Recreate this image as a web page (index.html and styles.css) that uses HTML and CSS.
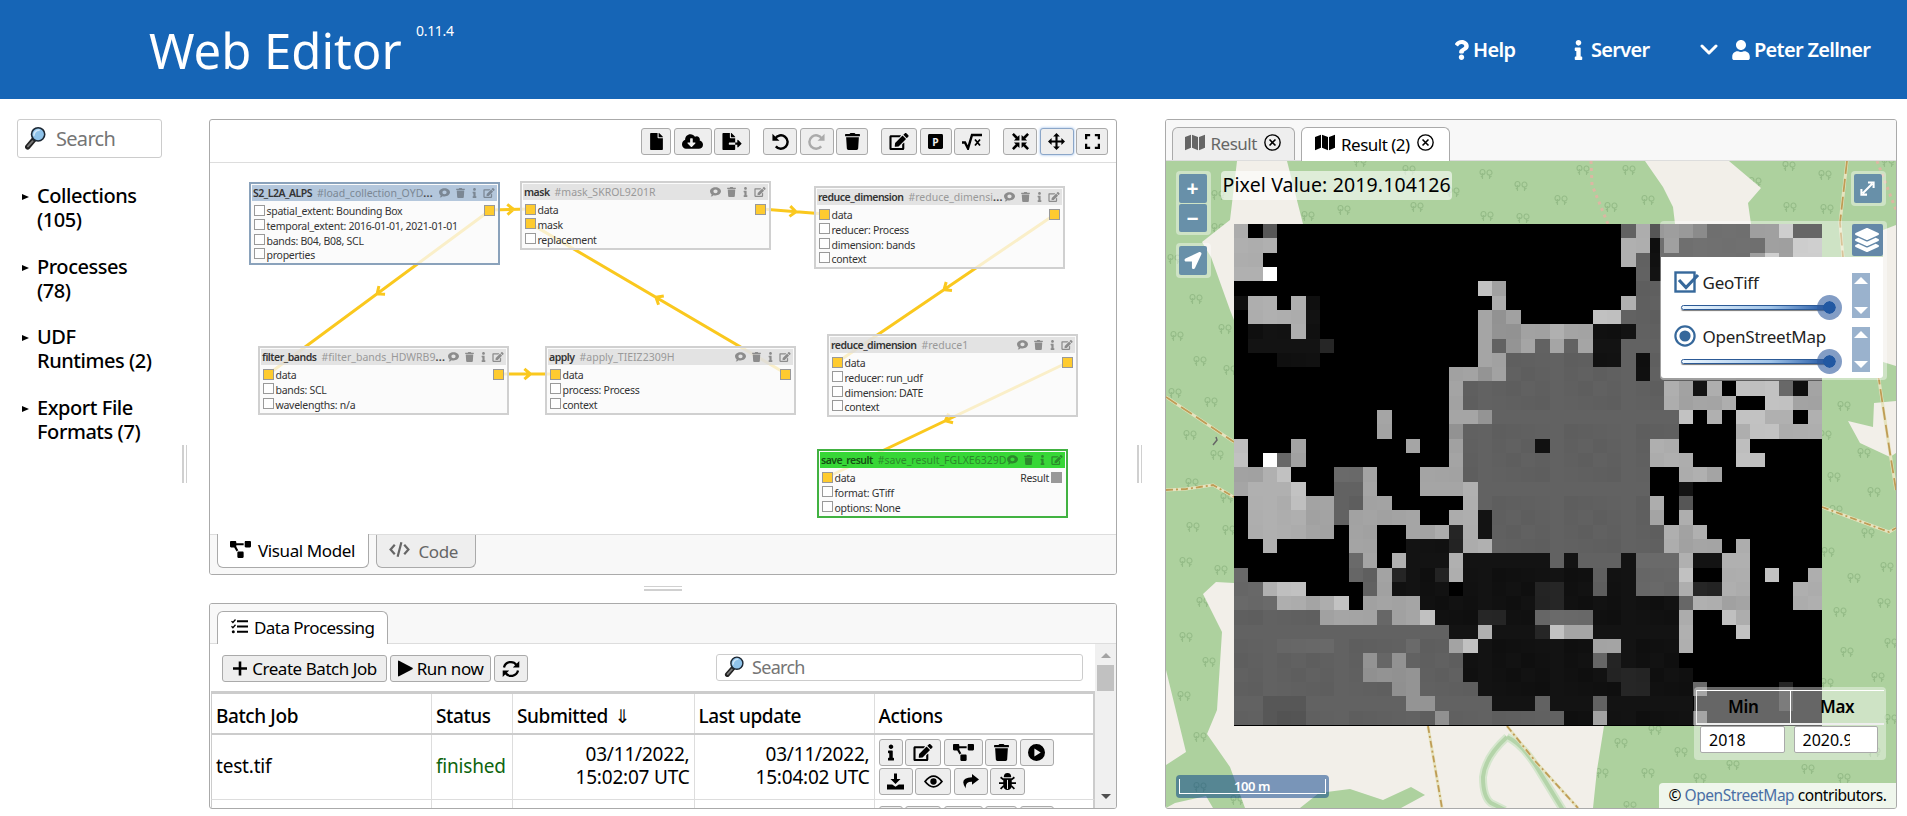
FILE: index.html
```html
<!DOCTYPE html>
<html lang="en">
<head>
<meta charset="utf-8">
<title>Web Editor</title>
<link rel="stylesheet" href="styles.css">
</head>
<body>
<svg class="sprite" aria-hidden="true">
  <symbol id="trash" viewBox="0 0 448 512"><path d="M432 32H312l-9.4-18.7A24 24 0 0 0 281.1 0H166.8a23.72 23.72 0 0 0-21.4 13.3L136 32H16A16 16 0 0 0 0 48v32a16 16 0 0 0 16 16h416a16 16 0 0 0 16-16V48a16 16 0 0 0-16-16zM53.2 467a48 48 0 0 0 47.9 45h245.8a48 48 0 0 0 47.9-45L416 128H32z"/></symbol>
  <symbol id="info" viewBox="0 0 192 512"><path d="M20 424.229h20V279.771H20c-11.046 0-20-8.954-20-20V212c0-11.046 8.954-20 20-20h112c11.046 0 20 8.954 20 20v212.229h20c11.046 0 20 8.954 20 20V492c0 11.046-8.954 20-20 20H20c-11.046 0-20-8.954-20-20v-47.771c0-11.046 8.954-20 20-20zM96 0C56.235 0 24 32.235 24 72s32.235 72 72 72 72-32.235 72-72S135.764 0 96 0z"/></symbol>
  <symbol id="edit" viewBox="0 0 576 512"><path d="M402.6 83.2l90.2 90.2c3.8 3.8 3.8 10 0 13.8L274.4 405.6l-92.8 10.3c-12.4 1.4-22.9-9.1-21.5-21.5l10.3-92.8L388.8 83.2c3.8-3.8 10-3.8 13.8 0zm162-22.9l-48.8-48.8c-15.2-15.2-39.9-15.2-55.2 0l-35.4 35.4c-3.8 3.8-3.8 10 0 13.8l90.2 90.2c3.8 3.8 10 3.8 13.8 0l35.4-35.4c15.2-15.3 15.2-40 0-55.2zM384 346.2V448H64V128h229.8c3.2 0 6.2-1.3 8.5-3.5l40-40c7.6-7.6 2.2-20.5-8.5-20.5H48C21.5 64 0 85.5 0 112v352c0 26.5 21.5 48 48 48h352c26.5 0 48-21.5 48-48V306.2c0-10.7-12.9-16-20.5-8.5l-40 40c-2.2 2.3-3.5 5.3-3.5 8.5z"/></symbol>
  <symbol id="user" viewBox="0 0 448 512"><path d="M224 256c70.7 0 128-57.3 128-128S294.7 0 224 0 96 57.3 96 128s57.3 128 128 128zm89.6 32h-16.7c-22.2 10.2-46.9 16-72.9 16s-50.6-5.8-72.9-16h-16.7C60.2 288 0 348.2 0 422.4V464c0 26.5 21.5 48 48 48h352c26.5 0 48-21.5 48-48v-41.6c0-74.2-60.2-134.4-134.4-134.4z"/></symbol>
  <symbol id="question" viewBox="0 0 384 512"><path d="M202.021 0C122.202 0 70.503 32.703 29.914 91.026c-7.363 10.58-5.093 25.086 5.178 32.874l43.138 32.709c10.373 7.865 25.132 6.026 33.253-4.148 25.049-31.381 43.63-49.449 82.757-49.449 30.764 0 68.816 19.799 68.816 49.631 0 22.552-18.617 34.134-48.993 51.164-35.423 19.86-82.299 44.576-82.299 106.405V320c0 13.255 10.745 24 24 24h72.471c13.255 0 24-10.745 24-24v-5.773c0-42.86 125.268-44.645 125.268-160.627C377.504 66.256 286.902 0 202.021 0zM192 373.459c-38.196 0-69.271 31.075-69.271 69.271 0 38.195 31.075 69.27 69.271 69.27s69.271-31.075 69.271-69.271-31.075-69.27-69.271-69.27z"/></symbol>
  <symbol id="chevron" viewBox="0 0 18 12"><path d="M2 2l7 7 7-7" fill="none" stroke="currentColor" stroke-width="3" stroke-linecap="round" stroke-linejoin="round"/></symbol>
  <symbol id="file" viewBox="0 0 384 512"><path d="M224 136V0H24C10.7 0 0 10.7 0 24v464c0 13.3 10.7 24 24 24h336c13.3 0 24-10.7 24-24V160H248c-13.2 0-24-10.8-24-24zm160-14.1v6.1H256V0h6.1c6.4 0 12.5 2.5 17 7l97.9 98c4.5 4.5 7 10.6 7 16.9z"/></symbol>
  <symbol id="cloud" viewBox="0 0 640 512"><path d="M537.6 226.6c4.1-10.7 6.4-22.4 6.4-34.6 0-53-43-96-96-96-19.7 0-38.1 6-53.3 16.2C367 64.2 315.3 32 256 32c-88.4 0-160 71.6-160 160 0 2.7.1 5.4.2 8.1C40.2 219.8 0 273.2 0 336c0 79.5 64.5 144 144 144h368c70.7 0 128-57.3 128-128 0-61.9-44-113.6-102.4-125.4zm-132.9 88.7L299.3 420.7c-6.2 6.2-16.4 6.2-22.6 0L171.3 315.3c-10.1-10.1-2.9-27.3 11.3-27.3H248V176c0-8.8 7.2-16 16-16h48c8.8 0 16 7.2 16 16v112h65.4c14.2 0 21.4 17.2 11.3 27.3z"/></symbol>
  <symbol id="export" viewBox="0 0 576 512"><path d="M384 121.9c0-6.3-2.5-12.4-7-16.9L279.1 7c-4.5-4.5-10.6-7-17-7H256v128h128zM571 308l-95.7-96.4c-10.1-10.1-27.4-3-27.4 11.3V288h-64v64h64v65.2c0 14.3 17.3 21.4 27.4 11.3L571 332c6.6-6.6 6.6-17.4 0-24zm-379 28v-32c0-8.8 7.2-16 16-16h176V160H248c-13.2 0-24-10.8-24-24V0H24C10.7 0 0 10.7 0 24v464c0 13.3 10.7 24 24 24h336c13.3 0 24-10.7 24-24V352H208c-8.8 0-16-7.2-16-16z"/></symbol>
  <symbol id="undo" viewBox="0 0 16 16"><path d="M3 5.2A6.3 6.3 0 1 1 3.6 12.6" fill="none" stroke="currentColor" stroke-width="2.3"/><path d="M.4 .8v6.6H7z"/></symbol>
  <symbol id="redo" viewBox="0 0 16 16"><path d="M13 5.2A6.3 6.3 0 1 0 12.4 12.6" fill="none" stroke="currentColor" stroke-width="2.3"/><path d="M15.6 .8v6.6H9z"/></symbol>
  <symbol id="parking" viewBox="0 0 16 16"><rect width="16" height="16" rx="1.5"/><text x="8" y="12.4" text-anchor="middle" class="parking-letter">P</text></symbol>
  <symbol id="root" viewBox="0 0 20 16"><path d="M0 9h3l3 6L10 1.5h10" fill="none" stroke="currentColor" stroke-width="2.4"/><path d="M13 6l5 6M18 6l-5 6" stroke="currentColor" stroke-width="1.8"/></symbol>
  <symbol id="compress" viewBox="0 0 16 16"><path d="M7 7H1.8l1.7-1.7L0 1.7 1.7 0l3.6 3.5L7 1.8zM9 7V1.8l1.7 1.7L14.3 0 16 1.7l-3.5 3.6L14.2 7zM7 9v5.2l-1.7-1.7L1.7 16 0 14.3l3.5-3.6L1.8 9zM9 9h5.2l-1.7 1.7 3.5 3.6-1.7 1.7-3.6-3.5L9 14.2z"/></symbol>
  <symbol id="move" viewBox="0 0 16 16"><path d="M8 0l3.2 3.4H9V7h3.6V4.8L16 8l-3.4 3.2V9H9v3.6h2.2L8 16l-3.2-3.4H7V9H3.4v2.2L0 8l3.4-3.2V7H7V3.4H4.8z"/></symbol>
  <symbol id="expand" viewBox="0 0 16 16"><path d="M1.2 5.5V1.2h4.3M10.5 1.2h4.3v4.3M14.8 10.5v4.3h-4.3M5.5 14.8H1.2v-4.3" fill="none" stroke="currentColor" stroke-width="2.4"/></symbol>
  <symbol id="diagram" viewBox="0 0 640 512"><path d="M384 320H256c-17.67 0-32 14.33-32 32v128c0 17.67 14.33 32 32 32h128c17.67 0 32-14.33 32-32V352c0-17.67-14.33-32-32-32zM192 32c0-17.67-14.33-32-32-32H32C14.33 0 0 14.33 0 32v128c0 17.67 14.33 32 32 32h95.72l73.16 128.04C211.98 300.98 232.4 288 256 288h.28L192 175.51V128h224V64H192V32zM608 0H480c-17.67 0-32 14.33-32 32v128c0 17.67 14.33 32 32 32h128c17.67 0 32-14.33 32-32V32c0-17.67-14.33-32-32-32z"/></symbol>
  <symbol id="code" viewBox="0 0 20 16"><path d="M5.5 3.5L1.5 8l4 4.5M14.5 3.5l4 4.5-4 4.5M11.8 1L8.2 15" fill="none" stroke="currentColor" stroke-width="2.1"/></symbol>
  <symbol id="tasks" viewBox="0 0 17 16"><path d="M6 2.8h11M6 8h11M6 13.2h11" stroke="currentColor" stroke-width="1.9"/><path d="M.5 2.6l1.4 1.4L4.5 1M.5 7.800l1.4 1.4L4.5 6.2" fill="none" stroke="currentColor" stroke-width="1.3"/><circle cx="2.3" cy="13.2" r="1.5"/></symbol>
  <symbol id="plus" viewBox="0 0 16 16"><path d="M8 1v14M1 8h14" stroke="currentColor" stroke-width="2.6"/></symbol>
  <symbol id="play" viewBox="0 0 15 16"><path d="M0 .8v14.4q0 1 1 .6L14.4 8.700q.8-.7 0-1.4L1 .2Q0-.2 0 .8z"/></symbol>
  <symbol id="sync" viewBox="0 0 18 18"><path d="M2 7.5A7 7 0 0 1 14.500 5M16 10.500A7 7 0 0 1 3.500 13" fill="none" stroke="currentColor" stroke-width="2.3"/><path d="M17.300 1v6.500h-6.500zM.7 17v-6.500h6.500z"/></symbol>
  <symbol id="playcircle" viewBox="0 0 16 16"><path fill-rule="evenodd" d="M8 0a8 8 0 1 0 0 16A8 8 0 0 0 8 0zM6 4.200L12 8l-6 3.800z"/></symbol>
  <symbol id="download" viewBox="0 0 17 16"><path d="M7 0h3v5.500h3.500L8.500 10.500l-5-5H7z"/><path d="M0 11h5.200l3.300 2.300L11.800 11H17v5H0z"/></symbol>
  <symbol id="eye" viewBox="0 0 18 12"><path d="M1 6q8-10 16 0-8 10-16 0z" fill="none" stroke="currentColor" stroke-width="1.7"/><circle cx="9" cy="6" r="3"/></symbol>
  <symbol id="share" viewBox="0 0 17 15"><path d="M10 0l7 5.500-7 5.300V7.700Q3 7.500 3.800 14.500-3.500 4 10 3.300z"/></symbol>
  <symbol id="bug" viewBox="0 0 16 16"><path d="M4.500 4a3.500 4 0 0 1 7 0zM4 5h8v7a4 4 0 0 1-8 0z"/><path d="M4.500 6.500L1.500 4M11.500 6.500l3-2.500M0 9.500h16M4.500 12L1.500 15M11.500 12l3 3" stroke="currentColor" stroke-width="1.6"/><path d="M8 6.500V15" stroke="#eee"/></symbol>
  <symbol id="comment" viewBox="0 0 16 14"><path fill-rule="evenodd" d="M8 0c4.500 0 8 2.700 8 6s-3.500 6-8 6c-1 0-2-.1-2.800-.4Q3.500 13.500 1 13.700q1.300-1.300 1.400-3Q0 8.700 0 6c0-3.300 3.500-6 8-6zM8 3.200A3 2.700 0 1 0 8 8.800 3 2.700 0 1 0 8 3.200z"/></symbol>
  <symbol id="map" viewBox="0 0 20 16"><path d="M0 2.500L6 .3v13L0 15.800zM7 .3l6 2.200V15.700l-6-2.400zM14 2.500L20 .2v13L14 15.700z"/></symbol>
  <symbol id="close" viewBox="0 0 16 16"><path d="M5.200 5.200l5.600 5.600M10.800 5.200l-5.600 5.600" stroke="currentColor" stroke-width="1.5"/><circle cx="8" cy="8" r="7.200" fill="none" stroke="currentColor" stroke-width="1.3"/></symbol>
  <symbol id="lens" viewBox="0 0 20 22"><path d="M2.500 19.500l6-7" stroke="#222" stroke-width="5" stroke-linecap="round"/><path d="M2.800 19l4.500-5" stroke="#777" stroke-width="1.8" stroke-linecap="round"/><circle cx="12.500" cy="7.500" r="6.300" fill="#8fc3ea" stroke="#1c2733" stroke-width="1.5"/><path d="M8.500 9a5 5 0 0 1 5.500-5.500" fill="none" stroke="#cfe6f8" stroke-width="1.600"/></symbol>
  <symbol id="layers" viewBox="0 0 512 512"><path d="M12.41 148.02l232.94 105.67c6.8 3.09 14.49 3.09 21.29 0l232.94-105.67c16.55-7.51 16.55-32.52 0-40.03L266.65 2.31a25.607 25.607 0 0 0-21.29 0L12.41 107.98c-16.55 7.51-16.55 32.53 0 40.04zm487.18 88.28l-58.09-26.33-161.64 73.27c-7.56 3.43-15.59 5.17-23.86 5.17s-16.29-1.74-23.86-5.17L70.51 209.97l-58.1 26.33c-16.55 7.5-16.55 32.5 0 40l232.94 105.59c6.8 3.08 14.49 3.08 21.29 0L499.59 276.3c16.55-7.5 16.55-32.5 0-40zm0 127.8l-57.87-26.23-161.86 73.37c-7.56 3.43-15.59 5.17-23.86 5.17s-16.29-1.74-23.86-5.17L70.29 337.87 12.41 364.1c-16.55 7.5-16.55 32.5 0 40l232.94 105.59c6.8 3.08 14.49 3.08 21.29 0L499.59 404.1c16.55-7.5 16.55-32.5 0-40z"/></symbol>
  <symbol id="locate" viewBox="0 0 512 512"><path d="M444.52 3.52L28.74 195.42c-47.97 22.39-31.98 92.75 19.19 92.75h175.91v175.91c0 51.17 70.36 67.17 92.75 19.19l191.9-415.78c15.99-38.39-25.59-79.97-63.97-63.97z"/></symbol>
  <symbol id="resize" viewBox="0 0 16 16"><path d="M3 13L13 3M8.500 1.500h6v6M1.500 8.500v6h6" fill="none" stroke="currentColor" stroke-width="2.2"/></symbol>
  <symbol id="trees" viewBox="0 0 14 12"><path d="M3.500 11V5M1 4.500a2.500 3 0 1 1 5 0 2.500 2 0 0 1-5 0M2 8l1.500 1.500M10.500 11V7M8 5a2.500 3 0 1 1 5 0 2.500 2 0 0 1-5 0M12.500 8l-2 1.500" fill="none" stroke="#95bc88" stroke-width="1.1"/></symbol>
</svg>

<header class="header">
  <h1 class="title">Web Editor</h1>
  <span class="version">0.11.4</span>
  <nav class="nav">
    <a class="nav-help"><svg class="i-question"><use href="#question"/></svg>Help</a>
    <a class="nav-server"><svg class="i-info"><use href="#info"/></svg>Server</a>
    <a class="nav-user"><svg class="i-chevron"><use href="#chevron"/></svg><svg class="i-user"><use href="#user"/></svg>Peter Zellner</a>
  </nav>
</header>

<main class="main">
  <aside class="sidebar">
    <div class="search"><svg><use href="#lens"/></svg><span>Search</span></div>
    <ul class="tree">
      <li>Collections (105)</li>
      <li>Processes (78)</li>
      <li>UDF<br>Runtimes (2)</li>
      <li>Export File Formats (7)</li>
    </ul>
  </aside>
  <div class="split-v"><i></i></div>

  <div class="middle">
    <section class="panel editor">
      <div class="toolbar">
        <div class="group">
          <button class="w30"><svg class="s12"><use href="#file"/></svg></button>
          <button class="w38"><svg class="s22"><use href="#cloud"/></svg></button>
          <button class="w36"><svg class="s20"><use href="#export"/></svg></button>
        </div>
        <div class="group">
          <button class="w34"><svg class="s17"><use href="#undo"/></svg></button>
          <button class="w34 off"><svg class="s17"><use href="#redo"/></svg></button>
          <button class="w32"><svg class="s15"><use href="#trash"/></svg></button>
        </div>
        <div class="group">
          <button class="w36"><svg class="s20"><use href="#edit"/></svg></button>
          <button class="w32"><svg class="s15"><use href="#parking"/></svg></button>
          <button class="w36"><svg class="s20"><use href="#root"/></svg></button>
        </div>
        <div class="group">
          <button class="w34"><svg class="s17"><use href="#compress"/></svg></button>
          <button class="w34 focus"><svg class="s17"><use href="#move"/></svg></button>
          <button class="w32"><svg class="s15"><use href="#expand"/></svg></button>
        </div>
      </div>
      <div class="canvas" id="canvas"><svg class="edges" id="edges" width="906" height="371"></svg></div>
      <div class="tabs tabs-bottom">
        <div class="tab active"><svg class="s22"><use href="#diagram"/></svg>Visual Model</div>
        <div class="tab tab-code"><svg class="s22"><use href="#code"/></svg>Code</div>
      </div>
    </section>
    <div class="split-h"><i></i></div>
    <section class="panel jobs">
      <div class="tabs tabs-top"><div class="tab active tab-data"><svg class="s17"><use href="#tasks"/></svg>Data Processing</div></div>
      <div class="jobs-body">
        <div class="jobs-content">
          <div class="jobs-bar">
            <button class="w165"><svg class="s16"><use href="#plus"/></svg>Create Batch Job</button>
            <button class="w101"><svg class="s15"><use href="#play"/></svg>Run now</button>
            <button class="w34"><svg class="s18"><use href="#sync"/></svg></button>
            <div class="search search-jobs"><svg><use href="#lens"/></svg><span>Search</span></div>
          </div>
          <div class="grid head">
            <div>Batch Job</div><div>Status</div><div>Submitted <span class="sort">⇓</span></div><div>Last update</div><div>Actions</div>
          </div>
          <div class="grid row">
            <div>test.tif</div><div class="ok">finished</div>
            <div class="date">03/11/2022,<br>15:02:07 UTC</div><div class="date">03/11/2022,<br>15:04:02 UTC</div>
            <div class="actions">
              <button class="w24"><svg class="s6"><use href="#info"/></svg></button>
              <button class="w36"><svg class="s20"><use href="#edit"/></svg></button>
              <button class="w39"><svg class="s22"><use href="#diagram"/></svg></button>
              <button class="w32"><svg class="s15"><use href="#trash"/></svg></button>
              <button class="w34"><svg class="s17"><use href="#playcircle"/></svg></button>
              <button class="w34"><svg class="s17"><use href="#download"/></svg></button>
              <button class="w36"><svg class="s19"><use href="#eye"/></svg></button>
              <button class="w34"><svg class="s17"><use href="#share"/></svg></button>
              <button class="w35"><svg class="s17"><use href="#bug"/></svg></button>
            </div>
          </div>
          <div class="grid row row-next">
            <div></div><div></div><div></div><div></div>
            <div class="actions"><button class="w24"></button><button class="w36"></button><button class="w39"></button><button class="w32"></button><button class="w34"></button></div>
          </div>
        </div>
        <div class="scrollbar"><i class="up"></i><i class="thumb"></i><i class="down"></i></div>
      </div>
    </section>
  </div>
  <div class="split-v"><i></i></div>

  <section class="panel viewer">
    <div class="tabs tabs-top">
      <div class="tab tab-r1"><svg class="s20"><use href="#map"/></svg>Result<svg class="s17 x"><use href="#close"/></svg></div>
      <div class="tab active tab-r2"><svg class="s20"><use href="#map"/></svg>Result (2)<svg class="s17 x"><use href="#close"/></svg></div>
    </div>
    <div class="map">
      <svg class="basemap" viewBox="1166 161 730 647" width="730" height="647">
        <rect x="1166" y="161" width="730" height="647" fill="#add19e"/>
        <g id="forest"></g>
        <g fill="#f2efe9">
          <path d="M1237 161h50l16 63v30h-69v66l-4-10-19-53-9-15 28-22z"/>
          <path d="M1645 161h84l32 27-13 15 3 21h-76l-2-17-10-20z"/>
          <path d="M1896 225l-13 5v132l13 4z"/>
          <path d="M1874 403l22-2v52l-6 4-30-14-12-22 25 6z"/>
          <path d="M1216 582l-13 12 19 38-5 78-10 24 23 33 15 41h348l4-38 7-44v-40h-370V583z"/>
          <path d="M1166 670l20 82-20 13zM1166 808l9-5 31-7 7 12z"/>
        </g>
        <path fill="#add19e" d="M1300 808l19-15 31-4 33 11 28-13 14 8-24 13z"/>
        <path d="M1507 737q-22 20-24 40 0 20 8 26l14 7M1507 737q14 6 29 29l27 44" fill="none" stroke="#d5e6cd" stroke-width="8"/>
        <path d="M1507 737q-22 20-24 40 0 20 8 26l14 7M1507 737q14 6 29 29l27 44" fill="none" stroke="#b4d4a9" stroke-width="4"/>
        <g fill="none" stroke="#e6e3bf" stroke-width="3">
          <path d="M1166 397L1234 442M1166 490l20-1 27-4 21 12M1822 507l67 25 7-4M1428 726l14 82M1507 726l29 36 42 46M1847 161l-7 62 3 34 36 123 11 73 6 37"/>
        </g>
        <g fill="none" stroke="#bf9c55" stroke-width="1.8">
          <path stroke-dasharray="13 5" d="M1166 397L1234 442M1847 161l-7 62 3 34 36 123 11 73 6 37"/>
          <path stroke-dasharray="7 3 2 3" d="M1166 490l20-1 27-4 21 12M1822 507l67 25 7-4M1428 726l14 82M1507 726l29 36 42 46"/>
          <path stroke="#dcb7a3" stroke-width="3" stroke-dasharray="3 4" d="M1591 161l1 24 16 39M1877 161l19 49"/>
        </g>
        <path d="M1213 445l4-5-1-3" fill="none" stroke="#666" stroke-width="1.5"/>
        <g id="raster" shape-rendering="crispEdges"></g>
      </svg>

      <div class="ctl zoom"><b>+</b><b>−</b></div>
      <div class="ctl locate"><b><svg class="s20"><use href="#locate"/></svg></b></div>
      <div class="pixel">Pixel Value: 2019.104126</div>
      <div class="ctl full"><b><svg class="s15"><use href="#resize"/></svg></b></div>
      <div class="switcher">
        <div class="switch-btn"><svg class="s24"><use href="#layers"/></svg></div>
        <div class="layer-list">
          <div class="layer">
            <div class="layer-main">
              <div class="layer-name"><svg width="26" height="24" viewBox="0 0 26 24"><rect x="1.5" y="1.5" width="19" height="19" fill="#fff" stroke="#36689b" stroke-width="2.4"/><path d="M5 9l7 7.500L24 4" fill="none" stroke="#36689b" stroke-width="3.200"/></svg>GeoTiff</div>
              <div class="slider"><i></i></div>
            </div>
            <div class="updown"><i></i><i></i></div>
          </div>
          <div class="layer">
            <div class="layer-main">
              <div class="layer-name"><svg width="26" height="24" viewBox="0 0 26 24"><circle cx="11" cy="11" r="9.6" fill="#fff" stroke="#36689b" stroke-width="2.2"/><circle cx="11" cy="11" r="5.6" fill="#36689b"/></svg>OpenStreetMap</div>
              <div class="slider"><i></i></div>
            </div>
            <div class="updown"><i></i><i></i></div>
          </div>
        </div>
      </div>
      <div class="minmax">
        <div class="mm-head"><span>Min</span><span>Max</span></div>
        <div class="mm-body"><div>2018</div><div><span>2020.9</span></div></div>
      </div>
      <div class="scale"><div>100 m</div></div>
      <div class="attribution">© <a>OpenStreetMap</a> contributors.</div>
    </div>
  </section>
</main>
<script src="app.js"></script>
</body>
</html>
```
FILE: styles.css
```css
* { box-sizing: border-box; }
body { margin: 0; width: 1907px; height: 816px; overflow: hidden; background: #fff; color: #000; font-family: "Noto Sans", "Open Sans", sans-serif; font-size: 19px; }
.sprite { display: none; }
svg { fill: currentColor; flex: none; }
.parking-letter { font: bold 11px "Noto Sans", sans-serif; fill: #eee; }
.s6 { width: 6px; height: 17px; }
.s12 { width: 13px; height: 17px; }
.s15 { width: 15px; height: 17px; }
.s16 { width: 16px; height: 17px; }
.s17 { width: 17px; height: 17px; }
.s18 { width: 18px; height: 18px; }
.s19 { width: 19px; height: 15px; }
.s20 { width: 20px; height: 17px; }
.s22 { width: 21px; height: 17px; }
.s24 { width: 24px; height: 24px; }

.header { display: flex; height: 99px; padding-left: 149px; background: #1665b6; color: #fff; }
.title { margin: 0; font-size: 49px; font-weight: 400; line-height: 101px; letter-spacing: 0; width: 251px; white-space: nowrap; }
.version { margin: 20px 0 0 16px; font-size: 14px; line-height: 22px; letter-spacing: -.3px; }
.nav { display: flex; margin-left: auto; padding-right: 34px; font-size: 20px; font-weight: 600; line-height: 99px; letter-spacing: -.7px; white-space: nowrap; }
.nav a { display: flex; align-items: center; }
.nav-help { width: 120px; }
.nav-server { width: 126px; }
.nav-user { width: 173px; }
.i-question { width: 15px; height: 20px; margin-right: 4px; }
.i-info { width: 9px; height: 20px; margin-right: 8px; }
.i-chevron { width: 18px; height: 12px; margin-right: 14px; }
.i-user { width: 18px; height: 20px; margin-right: 4px; }

.main { display: grid; grid-template-columns: 145px 47px 908px 48px 732px; height: 710px; padding: 20px 10px 0 17px; }
.search { display: flex; align-items: center; height: 39px; padding: 0 0 1px 7px; border: 1px solid #ccc; border-radius: 3px; color: #757575; background: #fff; font-size: 20px; letter-spacing: -.7px; }
.search svg { width: 21px; height: 24px; margin-right: 10px; }
.tree { margin: 24px 0 0; padding: 0; list-style: none; font-size: 20px; font-weight: 500; line-height: 24px; letter-spacing: -.45px; }
.tree li { position: relative; width: 143px; padding: 2px 8px 0 20px; height: 70.5px; }
.tree li::before { content: ""; position: absolute; left: 5px; top: 12px; border-left: 7px solid #000; border-top: 3.5px solid transparent; border-bottom: 3.5px solid transparent; }
.split-v { display: flex; justify-content: center; padding: 326px 3px 0 0; }
.split-v i { width: 5px; height: 38px; border-left: 2px solid #d0d0d0; border-right: 1px solid #d0d0d0; }
.split-h { display: flex; justify-content: center; height: 28px; padding-top: 11px; }
.split-h i { width: 38px; height: 5px; border-top: 1px solid #d0d0d0; border-bottom: 2px solid #d0d0d0; }
.middle, .viewer { min-width: 0; }
.panel { border: 1px solid #aaa; border-radius: 3px; overflow: hidden; display: flex; flex-direction: column; }
.editor { height: 456px; }
.jobs { height: 206px; }
.viewer { height: 690px; margin-left: -.5px; }

button { display: flex; align-items: center; justify-content: center; height: 27px; padding: 0; border: 1px solid #aaa; border-radius: 3px; background: #eee; color: #000; font: inherit; letter-spacing: inherit; flex: none; }
.w24 { width: 24px; } .w30 { width: 30px; } .w32 { width: 32px; } .w34 { width: 34px; } .w35 { width: 35px; } .w36 { width: 36px; } .w38 { width: 38px; } .w39 { width: 39px; } .w101 { width: 101px; } .w165 { width: 165px; }
.off { color: #aaa; }
.focus { border-color: #8ba6c8; box-shadow: 0 0 3px #8fb5e6; }
.toolbar { display: flex; justify-content: flex-end; gap: 13px; height: 43px; padding: 8px 8px 0 0; border-bottom: 1px solid #ddd; }
.group { display: flex; gap: 2.5px; }

.canvas { position: relative; flex: 1; overflow: hidden; }
.edges { position: absolute; left: 0; top: 0; }
.edges path { fill: none; stroke: #fac81e; stroke-width: 3; }
.node { position: absolute; width: 251px; padding: 1px; border: 2px solid #d0d0d0; background: rgba(250, 250, 250, .78); font-size: 10.5px; letter-spacing: -.27px; color: #333; }
.node-head { display: flex; align-items: center; height: 16px; padding: 0 2px 0 1px; background: rgba(217, 217, 217, .7); white-space: nowrap; }
.node-head strong { font-weight: 600; color: #333; letter-spacing: -.5px; margin-right: 5px; }
.node-head span { flex: 1; color: #999; font-size: 10.5px; letter-spacing: 0; }
.node-head span b { color: #444; letter-spacing: .3px; }
.node-head div { display: flex; align-items: center; gap: 6.5px; color: #8c8c8c; }
.node-head .n-comment { width: 11px; height: 10px; } .node-head .n-trash { width: 9px; height: 10px; } .node-head .n-info { width: 5px; height: 10px; } .node-head .n-edit { width: 12px; height: 10px; }
.node-body { display: flex; justify-content: space-between; padding: 1.8px 1px 0 1.5px; }
.port { display: flex; align-items: center; height: 14.6px; line-height: 14px; white-space: nowrap; }
.port i { width: 11px; height: 11px; margin-right: 2px; border: 1px solid #999; background: rgba(255, 255, 255, .8); flex: none; }
.port .linked { background: #fecb2f; }
.port .result { background: #999; margin: 0 2px; }
.out i { margin: 0 1px 0 0; }
.port span { padding-top: 2.5px; }
.node.selected { border-color: #8aa2bb; }
.selected .node-head { background: rgba(176, 196, 218, .95); }
.selected .node-head span, .selected .node-head div { color: #7b8794; }
.node.final { border-color: #41b241; }
.final .node-head { background: rgba(40, 212, 40, .93); }
.final .node-head span, .final .node-head div { color: #2b8a2b; }
.final .node-head strong { color: #145014; }

.tabs { display: flex; gap: 6.5px; background: #f8f8f8; padding-left: 7px; font-size: 17px; letter-spacing: -.4px; color: #666; }
.tab { display: flex; align-items: center; height: 33px; padding-bottom: 1px; border: 1px solid #aaa; background: #eee; white-space: nowrap; }
.tab.active { background: #fff; color: #000; }
.tabs-bottom { height: 40px; border-top: 1px solid #ddd; }
.tabs-bottom .tab { margin-top: -1px; height: 34px; border-top: 0; border-radius: 0 0 6px 6px; width: 152px; padding: 0 0 0 12px; }
.tabs-bottom .tab-code { width: 100px; margin-top: 0; height: 33px; }
.tabs-bottom .tab svg { margin: -3px 7px 0 0; }
.tabs-bottom .tab-code svg { margin-right: 9px; }
.tabs-top { height: 40px; padding-top: 7px; border-bottom: 1px solid #ddd; flex: none; }
.tabs-top .tab { border-bottom: 0; border-radius: 6px 6px 0 0; }
.tab-data { width: 171px; padding-left: 13px; letter-spacing: -.55px; }
.tab-data svg { margin: -3px 6px 0 0; }

.jobs-body { display: flex; flex: 1; min-height: 0; }
.jobs-content { width: 885px; overflow: hidden; height: 164px; }
.jobs-bar { display: flex; align-items: flex-start; gap: 3px; height: 47px; padding: 11px 0 0 12px; font-size: 17px; letter-spacing: -.45px; }
.jobs-bar button svg { margin-right: 4px; }
.jobs-bar .w34 svg { margin: 0; }
.search-jobs { width: 367px; height: 27px; margin: -1px 0 0 185px; font-size: 18px; padding-bottom: 2px; }
.search-jobs svg { width: 21px; height: 21px; margin-right: 7px; }
.grid { display: grid; grid-template-columns: 220px 81px 181.5px 180px 219.5px; margin: 0 0 0 1px; width: 884px; border-right: 2px solid #ccc; border-left: 1px solid #ccc; border-bottom: 1px solid #ddd; }
.grid > div { padding: 0 4px; border-right: 1px solid #ddd; display: flex; align-items: center; }
.grid > div:last-child { border-right: 0; }
.head { height: 44px; border-top: 3px solid #ccc; border-bottom: 2px solid #ccc; font-weight: 500; letter-spacing: -.4px; white-space: pre; }
.head > div { padding-top: 4px; }
.sort { margin-left: 2px; font: 19px "DejaVu Sans", sans-serif; }
.row { height: 65px; letter-spacing: -.2px; line-height: 23px; }
.grid > .ok { color: #0d640d; }
.grid > .date { justify-content: flex-end; text-align: right; }
.grid.row > div { padding: 0 4px 2px 4px; }
.grid.row > .actions { display: flex; flex-wrap: wrap; gap: 2px 2.5px; align-content: flex-start; padding: 4px 30px 0 4px; }
.grid.row-next > .actions { padding-top: 6px; }
.row-next { overflow: hidden; }
.scrollbar { flex: 1; display: flex; flex-direction: column; align-items: center; background: #f0f0f0; height: 164px; }
.up { margin: 9px 0 7px; border: 5px solid transparent; border-top: 0; border-bottom-color: #a3a3a3; }
.thumb { width: 17px; height: 26px; background: #c1c1c1; }
.down { margin: auto 0 9px; border: 5px solid transparent; border-bottom: 0; border-top-color: #505050; }

.tab-r1 { width: 123px; padding-left: 12px; }
.tab-r2 { width: 149px; padding-left: 13px; }
.viewer .tabs { height: 41px; padding-left: 6px; letter-spacing: -.5px; }
.viewer .tab { height: 34px; }
.viewer .tab-r1 { height: 33px; }
.viewer .tab svg { margin: -3px 6px 0 0; }
.viewer .tab .x { color: #000; margin: -3px 0 0 7px; }
.map { position: relative; flex: 1; overflow: hidden; }
.basemap { display: block; }
.ctl { position: absolute; display: flex; flex-direction: column; gap: 1px; width: 35px; padding: 3px 4px 3px 3px; border-radius: 4px; background: rgba(255, 255, 255, .4); }
.ctl b { display: flex; align-items: center; justify-content: center; width: 28px; height: 28.5px; border-radius: 2px; background: #6890a9; color: #fff; font-size: 21px; line-height: 26px; }
.zoom { left: 10px; top: 10px; }
.locate { left: 10px; top: 82px; }
.full { left: 685px; top: 10px; }
.pixel { position: absolute; left: 55px; top: 10px; width: 231px; height: 29px; padding-left: 2px; border-radius: 4px; background: rgba(255, 255, 255, .6); font-size: 19.5px; line-height: 28px; letter-spacing: .13px; white-space: nowrap; }
.switcher { position: absolute; left: 494px; top: 60px; width: 227px; height: 159px; border-radius: 4px; background: rgba(255, 255, 255, .4); padding: 3px 4px 2px 2px; display: flex; flex-direction: column; align-items: flex-end; }
.switch-btn { display: flex; align-items: center; justify-content: center; width: 31px; height: 32px; border-radius: 2px; background: #6488a8; color: #fff; }
.layer-list { width: 222px; height: 121px; margin-top: 1px; padding: 14px 13px 0; border-radius: 0 0 3px 3px; background: #fff; }
.layer { display: flex; justify-content: space-between; height: 54px; }
.layer-name { display: flex; align-items: center; gap: 3px; height: 24px; padding-bottom: 1px; font-size: 17px; letter-spacing: -.25px; color: #222; }
.slider { position: relative; width: 150px; height: 5px; margin: 10px 0 0 7px; border: 1px solid #2c5a96; border-radius: 3px; background: linear-gradient(90deg, #eef8ff, #9fc3e8 60%, #1b51a0); box-shadow: 0 1px 1px #777; }
.slider i { position: absolute; right: -12px; top: -11px; width: 25px; height: 25px; border: 6px solid rgba(48, 91, 159, .6); border-radius: 50%; background: #2258a2; background-clip: padding-box; }
.updown { display: flex; flex-direction: column; justify-content: space-between; align-items: center; width: 18px; height: 45px; margin-top: 2px; padding: 4px 0; background: #9ab2cd; }
.updown i { border: 7px solid transparent; border-top: 0; border-bottom-color: #fff; }
.updown i + i { transform: rotate(180deg); }
.minmax { position: absolute; left: 528.5px; top: 526px; width: 191.5px; height: 73px; padding: 3px 2px; border-radius: 4px; background: rgba(255, 255, 255, .4); }
.mm-head { display: flex; height: 35px; border: 1px solid #eee; border-right: 0; border-bottom: 2px solid #eee; border-top-color: #fff; font-size: 17px; font-weight: 600; line-height: 32px; letter-spacing: -.3px; text-align: center; }
.mm-head span { flex: 1; }
.mm-head span + span { border-left: 1px solid #fff; }
.mm-body { display: flex; gap: 9px; padding: 1px 4px; }
.mm-body div { width: 84.5px; height: 27px; padding: 0 26px 0 8px; border: 1px solid #aaa; border-radius: 2px; background: #fff; font-size: 16px; line-height: 26px; overflow: hidden; letter-spacing: 0; }
.mm-body span { display: block; width: 47px; overflow: hidden; }
.scale { position: absolute; left: 10px; top: 614px; width: 153px; height: 23px; padding: 4px 3px; border-radius: 4px; background: rgba(0, 60, 136, .5); color: #fff; font-size: 13px; font-weight: 600; line-height: 14px; text-align: center; }
.scale div { height: 15px; border: 1px solid #fff; border-top: 0; letter-spacing: -.4px; }
.attribution { position: absolute; left: 493px; top: 622px; width: 237px; height: 25px; padding-left: 10px; border-radius: 4px 0 0; background: rgba(255, 255, 255, .8); font-size: 15.5px; line-height: 25px; letter-spacing: -.45px; white-space: nowrap; }
.attribution a { color: #4a6fa5; }
```
FILE: app.js
```js
// Process graph
const nodes = [
  { x: 39, y: 19, cls: 'selected', name: 'S2_L2A_ALPS', id: '#load_collection_OYD', cut: true, ports: ['spatial_extent: Bounding Box', 'temporal_extent: 2016-01-01, 2021-01-01', 'bands: B04, B08, SCL', 'properties'], linked: [] },
  { x: 310, y: 18, name: 'mask', id: '#mask_SKROL9201R', ports: ['data', 'mask', 'replacement'], linked: [0, 1] },
  { x: 604, y: 23, name: 'reduce_dimension', id: '#reduce_dimensi', cut: true, ports: ['data', 'reducer: Process', 'dimension: bands', 'context'], linked: [0] },
  { x: 48, y: 183, name: 'filter_bands', id: '#filter_bands_HDWRB9', cut: true, ports: ['data', 'bands: SCL', 'wavelengths: n/a'], linked: [0] },
  { x: 335, y: 183, name: 'apply', id: '#apply_TIEIZ2309H', ports: ['data', 'process: Process', 'context'], linked: [0] },
  { x: 617, y: 171, name: 'reduce_dimension', id: '#reduce1', ports: ['data', 'reducer: run_udf', 'dimension: DATE', 'context'], linked: [0] },
  { x: 607, y: 286, cls: 'final', name: 'save_result', id: '#save_result_FGLXE6329D', ports: ['data', 'format: GTiff', 'options: None'], linked: [0], result: true }
];
const links = [[0, 1, 0], [0, 3, 0], [3, 4, 0], [4, 1, 1], [1, 2, 0], [2, 5, 0], [5, 6, 0]];

const icon = n => `<svg class="n-${n}"><use href="#${n}"/></svg>`;
const canvas = document.getElementById('canvas');
for (const n of nodes) {
  const el = document.createElement('div');
  el.className = 'node ' + (n.cls || '');
  el.style.cssText = `left:${n.x}px;top:${n.y}px;height:${n.ports.length === 4 ? 83 : 68.5}px`;
  const ins = n.ports.map((p, i) => `<div class="port"><i class="${n.linked.includes(i) ? 'linked' : ''}"></i><span>${p}</span></div>`).join('');
  const out = n.result ? '<span>Result</span><i class="result"></i>' : '<i class="linked"></i>';
  el.innerHTML = `<div class="node-head"><strong>${n.name}</strong><span>${n.id}${n.cut ? '<b>...</b>' : ''}</span><div>${['comment', 'trash', 'info', 'edit'].map(icon).join('')}</div></div>
    <div class="node-body"><div>${ins}</div><div class="port out">${out}</div></div>`;
  canvas.append(el);
}

let d = '';
for (const [from, to, port] of links) {
  const x1 = nodes[from].x + 241.5, y1 = nodes[from].y + 28;
  const x2 = nodes[to].x + 10.5, y2 = nodes[to].y + 28 + port * 14.6;
  const a = Math.atan2(y2 - y1, x2 - x1), mx = (x1 + x2) / 2 + 3 * Math.cos(a), my = (y1 + y2) / 2 + 3 * Math.sin(a);
  const wing = s => `${mx - 8 * Math.cos(a + s)} ${my - 8 * Math.sin(a + s)}`;
  d += `M${x1} ${y1}L${x2} ${y2}M${wing(.7)}L${mx} ${my}L${wing(-.7)}`;
}
document.getElementById('edges').innerHTML = `<path d="${d}"/>`;

// Raster layer: each token is the first column of a run and its shade
const shade = { '.': 0, a: 17, b: 36, c: 60, d: 85, m: 96, n: 104, o: 146, g: 163, h: 174, k: 192, w: 255 };
const rows = [
  '0h 1. 2d 3. 27m 28h 29d 30m 31d 32c 33a 36m 38h 39.',
  '0h 3. 27h 29a 30m 31a 37m 39h',
  '0h 2. 27h 28m 29a 36m 37h 38m 39h',
  '0h 2w 3. 28m 29a 30m',
  '0. 17k 18g 19. 28m',
  '0a 1h 3. 4h 5a 6. 18h 19. 27h 28m',
  '0. 1h 5a 6. 17g 18o 19g 20. 25k 27m',
  '0. 1a 4h 5a 6. 17g 18o 20g 22h 23g 25a 28m',
  '0. 1a 6b 7. 17g 18m 19o 20g 21m 22g 23m 24g 25a 27m',
  '0. 3a 6. 17g 19m 25a 27m 28a 29m',
  '0. 15g 17o 18g 19m 28a 29m',
  '0. 15g 16m 30h 31g 32a 33h 34. 35k 38n 39a 40g',
  '0. 15g 16m 30h 31g 34h 35. 37k 39g',
  '0. 10g 11. 15g 17o 18m 31k 32. 33h 34. 35k 37h 39. 40h',
  '0. 10g 11. 15o 16m 31. 35h 36k 38h',
  '0k 1. 4g 5. 12g 13. 15g 16m 21a 22m 29h 31. 35k 36.',
  '0k 1. 2w 3n 4g 5. 15g 16m 29h 32. 35k 37.',
  '0g 2h 3k 4. 7n 9g 10. 13g 16m 29. 31h 33g 34.',
  '0g 1h 4k 5. 7m 9g 10. 13g 16h 17m 29. 31a 32.',
  '0. 1h 4k 5g 7m 9g 11. 16h 17m 29h 30. 31d 32.',
  '0. 1h 5g 7m 8g 13. 15h 17a 18m 29g 30. 31h 32.',
  '0. 1h 5g 7. 8g 10. 12g 14h 15b 16h 17a 18m 30h 31g 32h 33.',
  '0. 2h 3. 8g 10. 12a 15b 16h 18m 30h 31g 34. 35h 36.',
  '0. 8n 9g 10. 11h 12a 15h 16a 22m 23a 24m 27a 28n 31h 32a 34h 36.',
  '0n 1. 8n 9m 10g 11b 12a 14b 15h 16a 25m 26a 28n 31k 32. 34h 36. 37k 38. 40h',
  '0n 2h 3k 5. 9m 10g 11a 15. 16a 21b 23a 25m 26a 28n 31h 32b 34h 36. 39h',
  '0n 3h 5g 6h 7k 8. 9g 13a 21b 23a 31n 32h 34g 36. 39h',
  '0m 6g 10n 11g 13k 14a 17b 19a 21n 25a 31h 32. 34k 35h 36.',
  '0m 15a 17h 18a 21b 22k 23g 25a 31h 32. 35k 36.',
  '0m 3n 7m 12n 13m 15g 16k 17a 25g 27a 31h 32.',
  '0m 9o 10n 11o 12m 16a 25n 26b 27a 31.',
  '0m 9o 13m 16a 26b 29a 32.',
  '0m 11o 13m 17a 27b 29a 32n 33. 38b 39.',
  '0m 2d 5m 12o 14m 18a 21m 22a 25m 26a 32. 38b 39.',
  '0m 2d 5m 14o 15m 23a 25g 26a 32n 33.'
];
const cols = 41, cw = 588 / cols, ch = 501 / rows.length;
let cells = '<rect x="1234" y="224" width="588" height="502" fill="#000"/>';
rows.forEach((row, j) => {
  const runs = row.split(' ').map(t => [parseInt(t), t.slice(-1)]);
  runs.forEach(([start, key], k) => {
    if (key === '.') return;
    const end = k + 1 < runs.length ? runs[k + 1][0] : cols;
    for (let i = start; i < end; i++) {
      const v = key === 'w' ? 255 : shade[key] + ((i * 7 + j * 13 + (i * j) % 5) % 5) - 2;
      const x0 = Math.round(1234 + i * cw), x1 = Math.round(1234 + (i + 1) * cw);
      const y0 = Math.round(224 + j * ch), y1 = Math.round(224 + (j + 1) * ch);
      cells += `<rect x="${x0}" y="${y0}" width="${x1 - x0}" height="${y1 - y0}" fill="rgb(${v},${v},${v})"/>`;
    }
  });
});
document.getElementById('raster').innerHTML = cells;

// Forest symbols of the base map
const trees = [[1360,162],[1409,170],[1486,174],[1521,186],[1218,195],[1453,192],[1308,216],[1344,210],[1417,207],[1487,216],[1523,218],[1218,228],[1174,259],[1196,299],[1177,336],[1225,329],[1200,361],[1230,370],[1175,393],[1211,402],[1190,435],[1217,455],[1561,200],[1583,170],[1629,170],[1648,200],[1611,207],[1789,166],[1825,175],[1790,207],[1827,209],[1888,162],[1755,182],[1844,406],[1864,453],[1825,435],[1192,483],[1227,498],[1193,527],[1229,530],[1186,562],[1221,570],[1203,602],[1186,637],[1209,662],[1184,696],[1200,737],[1200,787],[1237,800],[1834,477],[1874,492],[1836,510],[1868,533],[1828,552],[1887,567],[1854,578],[1884,603],[1840,612],[1891,643],[1847,652],[1878,677],[1827,683],[1891,719],[1655,730],[1621,743],[1681,752],[1733,765],[1602,773],[1648,773],[1808,769],[1844,778],[1700,778],[1630,806],[1874,752]];
document.getElementById('forest').innerHTML = trees.map(([x, y]) => `<use href="#trees" x="${x - 7}" y="${y - 6}" width="14" height="12"/>`).join('');
```
